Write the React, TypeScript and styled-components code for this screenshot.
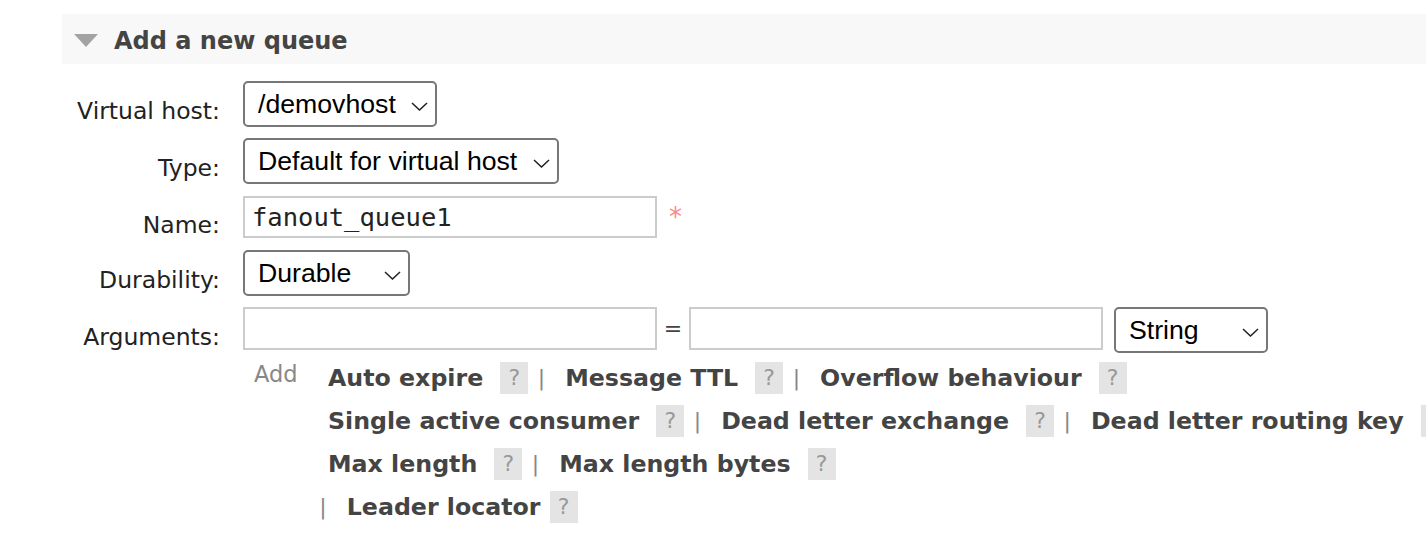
import React from "react";
import styled, { createGlobalStyle } from "styled-components";

const GlobalStyle = createGlobalStyle`
  html, body {
    margin: 0;
    padding: 0;
    background: #fff;
    overflow: hidden;
  }
  body {
    font-family: "DejaVu Sans", Verdana, sans-serif;
    color: #222;
  }
`;

const Section = styled.div`
  padding-top: 14px;
`;

const SectionHeader = styled.div`
  margin-left: 62px;
  height: 50px;
  background: #f8f8f8;
  display: flex;
  align-items: center;
  padding-left: 12px;
  gap: 16px;
`;

const Toggle = styled.span`
  width: 0;
  height: 0;
  margin-top: 2px;
  border-left: 12px solid transparent;
  border-right: 12px solid transparent;
  border-top: 13px solid #a3a3a3;
`;

const SectionTitle = styled.h2`
  margin: 3px 0 0;
  font-size: 24px;
  font-weight: bold;
  color: #444;
  white-space: nowrap;
`;

const Form = styled.div`
  margin: 17px 0 0 62px;
  display: grid;
  grid-template-columns: 158px auto;
  column-gap: 23px;
  row-gap: 11px;
  align-items: start;
`;

const Label = styled.label`
  text-align: right;
  font-size: 23.5px;
  line-height: 28px;
  padding-top: 16px;
  white-space: nowrap;
  color: #222;
`;

const Field = styled.div`
  display: flex;
  align-items: flex-start;
`;

const SelectWrap = styled.span`
  position: relative;
  display: inline-flex;
`;

const Select = styled.select`
  appearance: none;
  -webkit-appearance: none;
  box-sizing: border-box;
  height: 46px;
  padding: 0 39px 0 13px;
  border: 2px solid #777;
  border-radius: 5px;
  background: #fff;
  color: #000;
  font-family: "Liberation Sans", Arial, sans-serif;
  font-size: 26.67px;
  outline: none;
`;

const Chevron = styled.svg`
  position: absolute;
  right: 9px;
  top: 50%;
  margin-top: -2px;
  pointer-events: none;
`;

const TextInput = styled.input<{ $height: number }>`
  box-sizing: border-box;
  width: 414px;
  height: ${(p) => p.$height}px;
  border: 2px solid #ccc;
  padding: 0 7px;
  font-family: "DejaVu Sans Mono", "Liberation Mono", monospace;
  font-size: 25.5px;
  color: #222;
  background: #fff;
  outline: none;
`;

const NameInput = styled(TextInput)`
  margin: 1px 0;
`;

const Required = styled.span`
  margin: 8px 0 0 12px;
  color: #f88;
  font-size: 26px;
  line-height: 28px;
`;

const ArgCell = styled.div`
  display: flex;
  flex-direction: column;
`;

const ArgInputs = styled.div`
  display: flex;
  align-items: flex-start;
`;

const Equals = styled.span`
  width: 32px;
  text-align: center;
  font-size: 22px;
  line-height: 43px;
  color: #444;
`;

const TypeSelect = styled(SelectWrap)`
  margin-left: 11px;
`;

const ArgHelp = styled.div`
  display: flex;
  margin-top: 3px;
  padding-left: 11px;
`;

const AddLabel = styled.span`
  width: 74px;
  font-size: 22.5px;
  line-height: 36px;
  color: #888;
`;

const Lines = styled.div`
  display: flex;
  flex-direction: column;
  white-space: nowrap;
`;

const Line = styled.div`
  display: flex;
  align-items: center;
  height: 43px;
`;

const ArgLink = styled.span`
  font-weight: bold;
  font-size: 23.7px;
  color: #444;
  cursor: pointer;
`;

const Help = styled.span<{ $tight?: boolean }>`
  display: inline-flex;
  align-items: center;
  justify-content: center;
  width: 28px;
  height: 32px;
  margin-left: ${(p) => (p.$tight ? 9 : 17)}px;
  background: #e4e4e4;
  color: #999;
  font-size: 22px;
  flex: none;
`;

const Sep = styled.span<{ $lead?: boolean }>`
  margin: 0 20px 0 ${(p) => (p.$lead ? -8.7 : 9.5)}px;
  font-size: 22px;
  color: #888;
`;

function ChevronIcon() {
  return (
    <Chevron width="17" height="9" viewBox="0 0 17 9">
      <path d="M1 1 L8.5 8 L16 1" fill="none" stroke="#222" strokeWidth="1.5" />
    </Chevron>
  );
}

function Dropdown({ options, value }: { options: string[]; value: string }) {
  return (
    <SelectWrap>
      <Select defaultValue={value}>
        {options.map((o) => (
          <option key={o}>{o}</option>
        ))}
      </Select>
      <ChevronIcon />
    </SelectWrap>
  );
}

type Item = { label: string; tight?: boolean };

const argLines: { lead?: boolean; items: Item[] }[] = [
  { items: [{ label: "Auto expire" }, { label: "Message TTL" }, { label: "Overflow behaviour" }] },
  {
    items: [
      { label: "Single active consumer" },
      { label: "Dead letter exchange" },
      { label: "Dead letter routing key" },
    ],
  },
  { items: [{ label: "Max length" }, { label: "Max length bytes" }] },
  { lead: true, items: [{ label: "Leader locator", tight: true }] },
];

export default function App() {
  return (
    <>
      <GlobalStyle />
      <Section>
        <SectionHeader>
          <Toggle />
          <SectionTitle>Add a new queue</SectionTitle>
        </SectionHeader>
        <Form>
          <Label>Virtual host:</Label>
          <Field>
            <Dropdown options={["/", "/demovhost"]} value="/demovhost" />
          </Field>

          <Label>Type:</Label>
          <Field>
            <Dropdown
              options={["Default for virtual host", "Classic", "Quorum", "Stream"]}
              value="Default for virtual host"
            />
          </Field>

          <Label>Name:</Label>
          <Field>
            <NameInput $height={42} defaultValue="fanout_queue1" />
            <Required>*</Required>
          </Field>

          <Label>Durability:</Label>
          <Field>
            <Dropdown options={["Durable", "Transient"]} value="Durable" />
          </Field>

          <Label>Arguments:</Label>
          <ArgCell>
            <ArgInputs>
              <TextInput $height={43} />
              <Equals>=</Equals>
              <TextInput $height={43} />
              <TypeSelect>
                <Select defaultValue="String">
                  <option>String</option>
                  <option>Number</option>
                  <option>Boolean</option>
                  <option>List</option>
                </Select>
                <ChevronIcon />
              </TypeSelect>
            </ArgInputs>
            <ArgHelp>
              <AddLabel>Add</AddLabel>
              <Lines>
                {argLines.map((line, i) => (
                  <Line key={i}>
                    {line.lead && <Sep $lead>|</Sep>}
                    {line.items.map((it, j) => (
                      <React.Fragment key={it.label}>
                        {j > 0 && <Sep>|</Sep>}
                        <ArgLink>{it.label}</ArgLink>
                        <Help $tight={it.tight}>?</Help>
                      </React.Fragment>
                    ))}
                  </Line>
                ))}
              </Lines>
            </ArgHelp>
          </ArgCell>
        </Form>
      </Section>
    </>
  );
}
